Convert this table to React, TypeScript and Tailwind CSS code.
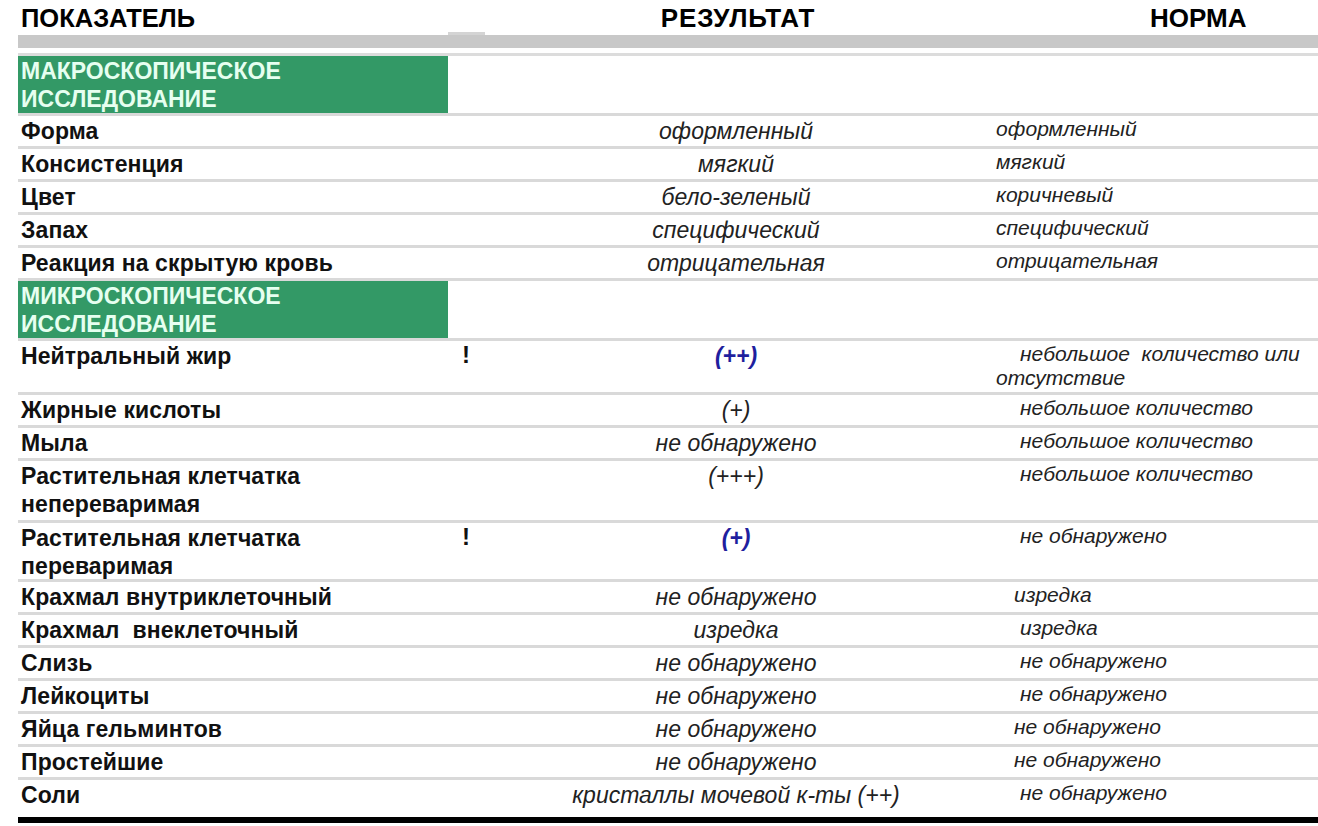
import React from "react";

type Row = {
  label: React.ReactNode;
  h: number;
  bang?: boolean;
  result: string;
  blue?: boolean;
  norm: React.ReactNode;
  normPl: string;
  indent?: boolean;
  last?: boolean;
};

const macro: Row[] = [
  { label: "Форма", h: 30, result: "оформленный", norm: "оформленный", normPl: "pl-[4px]" },
  { label: "Консистенция", h: 30, result: "мягкий", norm: "мягкий", normPl: "pl-[4px]" },
  { label: "Цвет", h: 30, result: "бело-зеленый", norm: "коричневый", normPl: "pl-[4px]" },
  { label: "Запах", h: 30, result: "специфический", norm: "специфический", normPl: "pl-[4px]" },
  { label: "Реакция на скрытую кровь", h: 30, result: "отрицательная", norm: "отрицательная", normPl: "pl-[4px]" },
];

const micro: Row[] = [
  {
    label: "Нейтральный жир",
    h: 51,
    bang: true,
    result: "(++)",
    blue: true,
    norm: "небольшое\u00a0 количество или отсутствие",
    normPl: "pl-[4px]",
    indent: true,
  },
  { label: "Жирные кислоты", h: 30, result: "(+)", norm: "небольшое количество", normPl: "pl-[28px]" },
  { label: "Мыла", h: 30, result: "не обнаружено", norm: "небольшое количество", normPl: "pl-[28px]" },
  {
    label: (
      <>
        Растительная клетчатка
        <br />
        непереваримая
      </>
    ),
    h: 59,
    result: "(+++)",
    norm: "небольшое количество",
    normPl: "pl-[28px]",
  },
  {
    label: (
      <>
        Растительная клетчатка
        <br />
        переваримая
      </>
    ),
    h: 56,
    bang: true,
    result: "(+)",
    blue: true,
    norm: "не обнаружено",
    normPl: "pl-[28px]",
  },
  { label: "Крахмал внутриклеточный", h: 30, result: "не обнаружено", norm: "изредка", normPl: "pl-[22px]" },
  { label: "Крахмал\u00a0 внеклеточный", h: 30, result: "изредка", norm: "изредка", normPl: "pl-[28px]" },
  { label: "Слизь", h: 30, result: "не обнаружено", norm: "не обнаружено", normPl: "pl-[28px]" },
  { label: "Лейкоциты", h: 30, result: "не обнаружено", norm: "не обнаружено", normPl: "pl-[28px]" },
  { label: "Яйца гельминтов", h: 30, result: "не обнаружено", norm: "не обнаружено", normPl: "pl-[22px]" },
  { label: "Простейшие", h: 30, result: "не обнаружено", norm: "не обнаружено", normPl: "pl-[22px]" },
  {
    label: "Соли",
    h: 37,
    result: "кристаллы мочевой к-ты (++)",
    norm: "не обнаружено",
    normPl: "pl-[28px]",
    last: true,
  },
];

const grid = "grid grid-cols-[430px_32px_512px_1fr]";

function DataRow({ r }: { r: Row }) {
  return (
    <div
      className={`${grid} ${r.last ? "" : "border-b-[3px] border-[#d9d9d9]"}`}
      style={{ height: r.h + (r.last ? 0 : 3) }}
    >
      <div className="pl-[3px] text-[23px] font-bold leading-[28px] pt-[1px] text-[#111] tracking-[0.1px]">
        {r.label}
      </div>
      <div className="pl-[14px] text-[24px] font-bold leading-[28px] pt-[0px] text-[#111]">
        {r.bang ? "!" : ""}
      </div>
      <div
        className={`text-center italic text-[23px] leading-[28px] pt-[1px] ${
          r.blue ? "font-bold text-[#1f1f9e]" : "text-[#222]"
        }`}
      >
        {r.result}
      </div>
      <div
        className={`${r.normPl} ${r.indent ? "indent-[24px] pr-[10px]" : ""} italic text-[21px] leading-[24px] pt-[1px] text-[#222] whitespace-pre-wrap`}
      >
        {r.norm}
      </div>
    </div>
  );
}

function Section({ title }: { title: string[] }) {
  return (
    <div className={`${grid} h-[60px] border-b-[3px] border-[#d9d9d9]`}>
      <div className="bg-[#339966] pl-[3px] pt-[1px] text-[23px] font-bold leading-[28px] text-[#e6fff0]">
        {title[0]}
        <br />
        {title[1]}
      </div>
    </div>
  );
}

export default function App() {
  return (
    <div
      className="w-[1318px] h-[826px] bg-white overflow-hidden pl-[18px]"
      style={{ fontFamily: '"Liberation Sans", Arial, sans-serif' }}
    >
      <div className={`${grid} h-[35px] items-center`}>
        <div className="pl-[3px] text-[25.5px] font-bold text-black leading-[30px] pt-[1px]">
          ПОКАЗАТЕЛЬ
        </div>
        <div className="self-end h-[3px] w-[37px] bg-[#d4d4d4]" />
        <div className="text-center text-[26px] font-bold text-black leading-[30px] pt-[1px] tracking-[0.8px] pl-[4px]">
          РЕЗУЛЬТАТ
        </div>
        <div className="pl-[158px] text-[26px] font-bold text-black leading-[30px] pt-[1px]">
          НОРМА
        </div>
      </div>
      <div className="h-[13px] bg-[#c8c8c8]" />
      <div className="h-[5px]" />
      <div className="h-[3px] bg-[#dcdcdc]" />
      <Section title={["МАКРОСКОПИЧЕСКОЕ", "ИССЛЕДОВАНИЕ"]} />
      {macro.map((r, i) => (
        <DataRow key={i} r={r} />
      ))}
      <Section title={["МИКРОСКОПИЧЕСКОЕ", "ИССЛЕДОВАНИЕ"]} />
      {micro.map((r, i) => (
        <DataRow key={i} r={r} />
      ))}
      <div className="h-[6px] bg-black" />
    </div>
  );
}
